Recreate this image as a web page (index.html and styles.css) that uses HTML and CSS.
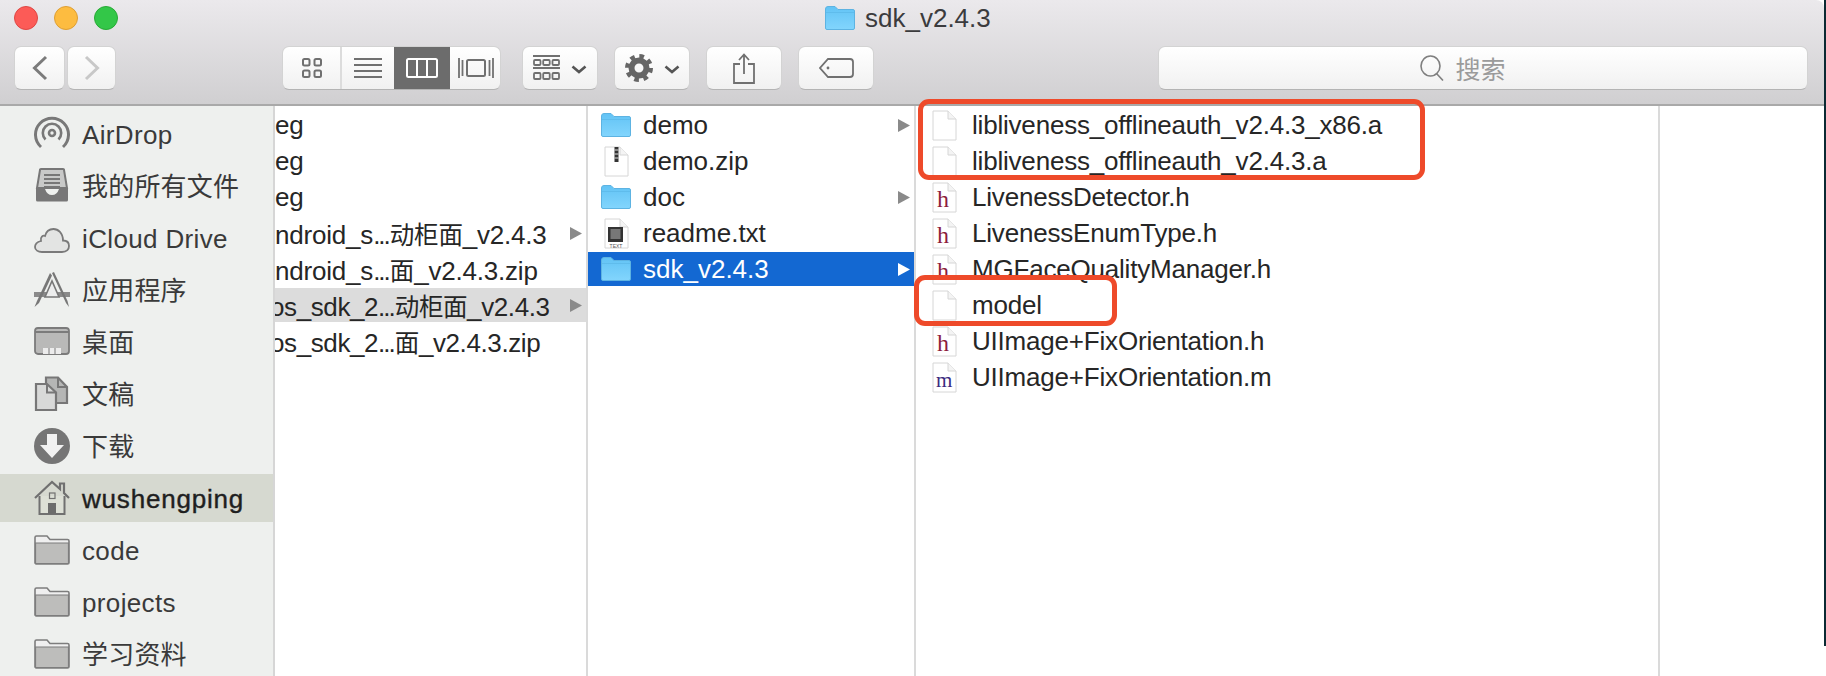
FILE: index.html
```html
<!DOCTYPE html>
<html lang="zh">
<head>
<meta charset="utf-8">
<title>sdk_v2.4.3</title>
<link rel="stylesheet" href="styles.css">
</head>
<body>
<svg class="defs" width="0" height="0" aria-hidden="true">
  <defs>
    <linearGradient id="fb" x1="0" y1="0" x2="0" y2="1"><stop offset="0" stop-color="#62c3f5"/><stop offset="1" stop-color="#82d5fd"/></linearGradient>
    <symbol id="folder" viewBox="0 0 30 24">
      <path d="M0.5 3 Q0.5 0.5 3 0.5 H10 L13 3.5 H28 Q29.5 3.5 29.5 5 V22 Q29.5 23.5 28 23.5 H2 Q0.5 23.5 0.5 22 Z" fill="url(#fb)" stroke="#5db3e2" stroke-width="1"/>
      <path d="M1 6.5 H29" stroke="#5fbcec" stroke-width="1"/>
    </symbol>
    <symbol id="page" viewBox="0 0 25 31">
      <path d="M1 1 H16 L24 9 V30 H1 Z" fill="#fff" stroke="#d6d6d6" stroke-width="1"/>
      <path d="M16 1 V9 H24" fill="#f4f4f4" stroke="#d6d6d6" stroke-width="1"/>
    </symbol>
    <symbol id="sfolder" viewBox="0 0 36 30">
      <path d="M1 28 V2.5 Q1 1 2.5 1 H13 L16 4.5 H33.5 Q35 4.5 35 6 V27.5 Q35 29 33.5 29 H2 Z" fill="#efefef" stroke="#7d7d7d" stroke-width="1.6"/>
      <path d="M1.5 8 H34.5 V28.5 H1.5 Z" fill="#bdbdbb" stroke="#7d7d7d" stroke-width="1.2"/>
    </symbol>
    <symbol id="arrow" viewBox="0 0 12 13"><path d="M0 0 L12 6.5 L0 13 Z"/></symbol>
    <symbol id="chev" viewBox="0 0 16 9"><path d="M1.5 1.5 L8 7 L14.5 1.5" fill="none" stroke="#555" stroke-width="2.6"/></symbol>
  </defs>
</svg>
<div class="window">
  <header class="toolbar">
    <div class="titlerow">
      <div class="lights">
        <span class="light red"></span><span class="light yellow"></span><span class="light green"></span>
      </div>
      <div class="title">
        <svg class="title-icon" width="30" height="24"><use href="#folder"/></svg>
        <span>sdk_v2.4.3</span>
      </div>
    </div>
    <div class="toolrow">
      <div class="btn nav-back">
        <svg width="16" height="26" viewBox="0 0 16 26"><path d="M14 2 L2.5 13 L14 24" fill="none" stroke="#7b7b7b" stroke-width="3"/></svg>
      </div>
      <div class="btn nav-fwd">
        <svg width="16" height="26" viewBox="0 0 16 26"><path d="M2 2 L13.5 13 L2 24" fill="none" stroke="#c8c8c8" stroke-width="3"/></svg>
      </div>
      <div class="btn-group">
        <div class="seg seg-icons">
          <svg width="22" height="22" viewBox="0 0 22 22" fill="none" stroke="#707070" stroke-width="2"><rect x="2" y="2" width="6.5" height="6.5" rx="1.5"/><rect x="13.5" y="2" width="6.5" height="6.5" rx="1.5"/><rect x="2" y="13.5" width="6.5" height="6.5" rx="1.5"/><rect x="13.5" y="13.5" width="6.5" height="6.5" rx="1.5"/></svg>
        </div>
        <div class="seg seg-list">
          <svg width="28" height="20" viewBox="0 0 28 20" stroke="#707070" stroke-width="2"><path d="M0 1 H28 M0 7 H28 M0 13 H28 M0 19 H28"/></svg>
        </div>
        <div class="seg seg-cols">
          <svg width="32" height="20" viewBox="0 0 32 20" fill="none" stroke="#fff" stroke-width="2"><rect x="1" y="1" width="30" height="18" rx="1.5"/><path d="M11 1 V19 M21 1 V19"/></svg>
        </div>
        <div class="seg seg-flow">
          <svg width="36" height="22" viewBox="0 0 36 22" fill="none" stroke="#707070" stroke-width="1.8"><path d="M1 1 V21 M4.5 3 V19 M35 1 V21 M31.5 3 V19"/><rect x="9" y="3" width="18" height="16" rx="1.5" stroke-width="2"/></svg>
        </div>
      </div>
      <div class="btn arrange">
        <svg width="27" height="26" viewBox="0 0 27 26" stroke="#707070" fill="none" stroke-width="1.8"><path d="M0 1 H27 M0 13 H27"/><rect x="1" y="5" width="6.5" height="5" rx="1"/><rect x="10.2" y="5" width="6.5" height="5" rx="1"/><rect x="19.5" y="5" width="6.5" height="5" rx="1"/><rect x="1" y="18" width="6.5" height="6" rx="1"/><rect x="10.2" y="18" width="6.5" height="6" rx="1"/><rect x="19.5" y="18" width="6.5" height="6" rx="1"/></svg>
        <svg class="chev" width="16" height="9"><use href="#chev"/></svg>
      </div>
      <div class="btn action">
        <svg width="28" height="28" viewBox="0 0 28 28" fill="none" stroke="#666"><circle cx="14" cy="14" r="11.5" stroke-width="5" stroke-dasharray="4.5 4.53"/><circle cx="14" cy="14" r="7.5" stroke-width="6"/></svg>
        <svg class="chev" width="16" height="9"><use href="#chev"/></svg>
      </div>
      <div class="btn share">
        <svg width="22" height="31" viewBox="0 0 22 31" fill="none" stroke="#707070" stroke-width="1.8"><path d="M7 11 H1 V30 H21 V11 H15"/><path d="M11 21 V2 M6 7 L11 1.5 L16 7"/></svg>
      </div>
      <div class="btn tag">
        <svg width="35" height="20" viewBox="0 0 35 20" fill="none" stroke="#707070" stroke-width="1.8"><path d="M9 1 H31 Q34 1 34 4 V16 Q34 19 31 19 H9 L1 10 Z"/><circle cx="9" cy="10" r="1.4" fill="#707070" stroke="none"/></svg>
      </div>
      <div class="search">
        <svg width="24" height="26" viewBox="0 0 24 26" fill="none" stroke="#7f7f7f" stroke-width="1.6"><ellipse cx="10.5" cy="11" rx="9.5" ry="10"/><path d="M16.5 18.5 L23 25.5"/></svg>
        <span>搜索</span>
      </div>
    </div>
  </header>

  <main class="browser">
    <nav class="sidebar">
      <div class="side-row">
        <svg class="side-icon" width="36" height="36" viewBox="0 0 36 36" fill="none" stroke="#787878" stroke-width="2.6"><circle cx="18" cy="17" r="3"/><path d="M11.5 23.5 A9.2 9.2 0 1 1 24.5 23.5"/><path d="M7 31 A16.5 16.5 0 1 1 29 31" stroke-width="3"/></svg>
        <span class="lat">AirDrop</span>
      </div>
      <div class="side-row">
        <svg class="side-icon" width="36" height="36" viewBox="0 0 36 36"><path d="M6 2 Q6 1 7 1 H29 Q30 1 30 2 L33 20 H3 Z" fill="#c8c9c8" stroke="#777" stroke-width="2"/><path d="M10 7 H26 M10 11 H26 M10 15 H26 M10 19 H26" stroke="#777" stroke-width="1.8"/><path d="M2 21 H11 Q13 27 18 27 Q23 27 25 21 H34 V32 Q34 33.5 32.5 33.5 H3.5 Q2 33.5 2 32 Z" fill="#777"/></svg>
        <span class="zh">我的所有文件</span>
      </div>
      <div class="side-row">
        <svg class="side-icon" width="36" height="36" viewBox="0 0 36 36"><path d="M8 32 H28 C33 32 35 29 35 26 C35 23 33 20.5 29 20.5 C29 13 24 9 19.5 9 C15 9 12 12 11 16 C9 15 6 17 7 21 C3 22 1 24.5 1 27 C1 30 4 32 8 32 Z" fill="#e3e4e3" stroke="#7a7a7a" stroke-width="1.8"/></svg>
        <span class="lat">iCloud Drive</span>
      </div>
      <div class="side-row">
        <svg class="side-icon" width="36" height="36" viewBox="0 0 36 36"><path d="M0 20 H36 V25 H0 Z" fill="#8a8a8a"/><path d="M18 1 L32 31 L35 35 L33.5 29 L20 0 Z" fill="#777"/><path d="M16 1 L3 29 L0.5 35 L5 31 L18 3.5 Z" fill="#777"/><path d="M11 25 L18 9 L25 25 Z" fill="#eceded" stroke="#777" stroke-width="1.6"/></svg>
        <span class="zh">应用程序</span>
      </div>
      <div class="side-row">
        <svg class="side-icon" width="36" height="36" viewBox="0 0 36 36"><rect x="1" y="4" width="34" height="26" rx="3" fill="#b9b9b8" stroke="#7b7b7b" stroke-width="1.8"/><path d="M1 8 H35" stroke="#7b7b7b" stroke-width="1.8"/><rect x="9" y="24" width="18" height="6" fill="#ececec"/><path d="M15 24 V30 M21 24 V30" stroke="#7b7b7b"/></svg>
        <span class="zh">桌面</span>
      </div>
      <div class="side-row">
        <svg class="side-icon" width="36" height="36" viewBox="0 0 36 36"><path d="M12 1.5 H24 L33 11 V27 H12 Z" fill="#b5b6b5" stroke="#777" stroke-width="2.2"/><path d="M24 1.5 V11 H33" fill="none" stroke="#777" stroke-width="2"/><path d="M2 8 H13 L22 16.5 V34 H2 Z" fill="#d8d9d8" stroke="#777" stroke-width="2.2"/><path d="M13 8 V16.5 H22" fill="none" stroke="#777" stroke-width="2"/></svg>
        <span class="zh">文稿</span>
      </div>
      <div class="side-row">
        <svg class="side-icon" width="36" height="36" viewBox="0 0 36 36"><circle cx="18" cy="18" r="18" fill="#757575"/><path d="M13 6 H23 V17 H30 L18 30 L6 17 H13 Z" fill="#f1f1f1"/></svg>
        <span class="zh">下载</span>
      </div>
      <div class="side-row side-current">
        <svg class="side-icon" width="36" height="36" viewBox="0 0 36 36"><path d="M1 18 L18 2 L26 9 V3.5 H30 V13 L35 18" fill="none" stroke="#707070" stroke-width="2.2"/><path d="M5.5 16 V34 H30.5 V16" fill="#dde0d6" stroke="#707070" stroke-width="2"/><rect x="15.5" y="13" width="5.5" height="5.5" fill="none" stroke="#707070" stroke-width="1.2"/><rect x="14" y="23" width="8" height="11" fill="#6c6c6c"/></svg>
        <span class="lat">wushengping</span>
      </div>
      <div class="side-row">
        <svg class="side-icon" width="36" height="30"><use href="#sfolder"/></svg>
        <span class="lat">code</span>
      </div>
      <div class="side-row">
        <svg class="side-icon" width="36" height="30"><use href="#sfolder"/></svg>
        <span class="lat">projects</span>
      </div>
      <div class="side-row">
        <svg class="side-icon" width="36" height="30"><use href="#sfolder"/></svg>
        <span class="zh">学习资料</span>
      </div>
    </nav>

    <section class="col col-a">
      <div class="row"><span class="name">eg</span></div>
      <div class="row"><span class="name">eg</span></div>
      <div class="row"><span class="name">eg</span></div>
      <div class="row"><span class="name">ndroid_s<span class="dots">...</span><span class="han">动柜面</span>_v2.4.3</span><svg class="arrow" width="12" height="13"><use href="#arrow"/></svg></div>
      <div class="row"><span class="name">ndroid_s<span class="dots">...</span><span class="han">面</span>_v2.4.3.zip</span></div>
      <div class="row row-parent"><span class="name clipped">os_sdk_2<span class="dots">...</span><span class="han">动柜面</span>_v2.4.3</span><svg class="arrow" width="12" height="13"><use href="#arrow"/></svg></div>
      <div class="row"><span class="name clipped">os_sdk_2<span class="dots">...</span><span class="han">面</span>_v2.4.3.zip</span></div>
    </section>

    <section class="col col-b">
      <div class="row">
        <svg class="f-icon" width="30" height="24"><use href="#folder"/></svg><span class="name">demo</span><svg class="arrow" width="12" height="13"><use href="#arrow"/></svg>
      </div>
      <div class="row">
        <svg class="f-icon" width="30" height="31" viewBox="0 0 30 31"><use href="#page" x="3" width="25" height="31"/><rect x="13.5" y="1" width="4" height="15" fill="#333"/><path d="M13.5 4 H17.5 M13.5 8 H17.5 M13.5 12 H17.5" stroke="#ddd"/></svg><span class="name">demo.zip</span>
      </div>
      <div class="row">
        <svg class="f-icon" width="30" height="24"><use href="#folder"/></svg><span class="name">doc</span><svg class="arrow" width="12" height="13"><use href="#arrow"/></svg>
      </div>
      <div class="row">
        <svg class="f-icon" width="30" height="31" viewBox="0 0 30 31"><use href="#page" x="3" width="25" height="31"/><rect x="7" y="9" width="15" height="15" fill="#333"/><rect x="9.5" y="11" width="10" height="10" fill="#777"/><text x="15" y="29.5" class="type-tag">TEXT</text></svg><span class="name">readme.txt</span>
      </div>
      <div class="row row-selected">
        <svg class="f-icon" width="30" height="24"><use href="#folder"/></svg><span class="name">sdk_v2.4.3</span><svg class="arrow" width="12" height="13"><use href="#arrow"/></svg>
      </div>
    </section>

    <section class="col col-c">
      <div class="row"><svg class="f-icon" width="25" height="31"><use href="#page"/></svg><span class="name">libliveness_offlineauth_v2.4.3_x86.a</span></div>
      <div class="row"><svg class="f-icon" width="25" height="31"><use href="#page"/></svg><span class="name">libliveness_offlineauth_v2.4.3.a</span></div>
      <div class="row"><svg class="f-icon" width="25" height="31"><use href="#page"/><text x="11" y="25" class="code-h">h</text></svg><span class="name">LivenessDetector.h</span></div>
      <div class="row"><svg class="f-icon" width="25" height="31"><use href="#page"/><text x="11" y="25" class="code-h">h</text></svg><span class="name">LivenessEnumType.h</span></div>
      <div class="row"><svg class="f-icon" width="25" height="31"><use href="#page"/><text x="11" y="25" class="code-h">h</text></svg><span class="name">MGFaceQualityManager.h</span></div>
      <div class="row"><svg class="f-icon" width="25" height="31"><use href="#page"/></svg><span class="name">model</span></div>
      <div class="row"><svg class="f-icon" width="25" height="31"><use href="#page"/><text x="11" y="25" class="code-h">h</text></svg><span class="name">UIImage+FixOrientation.h</span></div>
      <div class="row"><svg class="f-icon" width="25" height="31"><use href="#page"/><text x="12" y="25" class="code-m">m</text></svg><span class="name">UIImage+FixOrientation.m</span></div>
    </section>

    <section class="col col-d"></section>
  </main>
  <div class="mark mark-top"></div>
  <div class="mark mark-model"></div>
</div>
<div class="edge"></div>
</body>
</html>
```
FILE: styles.css
```css
html, body { margin: 0; padding: 0; height: 676px; overflow: hidden; background: #fff; }
body {
  display: flex;
  font-family: "Liberation Sans", "Noto Sans CJK SC", sans-serif;
  font-size: 26px;
  color: #2b2b2b;
}
.defs { position: absolute; }
.window { width: 1824px; height: 676px; display: flex; flex-direction: column; position: relative; }
.edge { width: 2px; height: 646px; background: #0b2a33; }

.toolbar {
  height: 104px;
  flex: none;
  background: linear-gradient(#ebe9ec, #d0cfd1);
  border-bottom: 2px solid #a9a9a9;
  border-top-right-radius: 8px;
  box-sizing: content-box;
}
.titlerow { height: 46px; display: flex; }
.lights { display: flex; gap: 16px; padding: 6px 0 0 14px; }
.light { width: 24px; height: 24px; border-radius: 50%; box-sizing: border-box; }
.red { background: #fc5b57; border: 1px solid #df4744; }
.yellow { background: #fdbc40; border: 1px solid #de9f34; }
.green { background: #33c748; border: 1px solid #27aa35; }
.title { display: flex; align-items: flex-start; gap: 10px; margin-left: 707px; padding-top: 6px; color: #3b3b3d; line-height: 24px; }

.toolrow { display: flex; align-items: flex-start; padding-left: 14px; }
.btn, .search, .btn-group {
  height: 44px;
  box-sizing: border-box;
  background: linear-gradient(#ffffff, #f1f1f1);
  border: 1px solid #d3d3d3;
  border-bottom-color: #b4b4b4;
  border-radius: 7px;
  display: flex;
  align-items: center;
  justify-content: center;
}
.nav-back { width: 51px; }
.nav-fwd { width: 49px; margin-left: 2px; }
.btn-group { width: 219px; margin-left: 166px; overflow: hidden; justify-content: flex-start; }
.seg { height: 44px; display: flex; align-items: center; justify-content: center; flex: none; }
.seg-icons { width: 57px; border-right: 2px solid #dcdcdc; }
.seg-list { width: 52px; }
.seg-cols { width: 56px; background: #6c6c6c; }
.seg-flow { width: 52px; }
.arrange { width: 76px; margin-left: 21px; gap: 11px; }
.action { width: 76px; margin-left: 16px; gap: 11px; }
.chev { margin-top: 2px; }
.share { width: 76px; margin-left: 16px; }
.tag { width: 76px; margin-left: 16px; }
.search {
  width: 650px;
  margin-left: 284px;
  gap: 11px;
  padding-right: 40px;
  color: #9b9b9b;
  font-size: 25px;
}

.browser { flex: 1; display: flex; min-height: 0; overflow: hidden; }
.sidebar {
  width: 273px;
  flex: none;
  background: #eef0ee;
  border-right: 2px solid #d6d6d6;
  padding-top: 4px;
  display: flex;
  flex-direction: column;
  gap: 4px;
}
.side-row { height: 48px; flex: none; display: flex; align-items: center; padding-left: 34px; color: #3a3a3a; }
.side-icon { width: 36px; flex: none; margin-right: 12px; }
.lat { padding-top: 2px; letter-spacing: 0.35px; }
.zh { padding-bottom: 3px; letter-spacing: 0.2px; }
.side-current { background: #d6d9d0; color: #1f1f1f; font-weight: 500; -webkit-text-stroke: 0.4px #1f1f1f; }
.side-current .lat { letter-spacing: 0.8px; }

.col { flex: none; padding-top: 2px; overflow: hidden; border-right: 2px solid #dadada; }
.col-a { width: 311px; }
.col-b { width: 326px; }
.col-c { width: 742px; }
.col-d { flex: 1; border-right: 0; }
.row { height: 34px; margin-bottom: 2px; display: flex; align-items: center; color: #262626; white-space: nowrap; }
.name { flex: 1; }
.col-a .row { padding-left: 0; padding-right: 4px; letter-spacing: -0.2px; }
.col-b .row { padding-left: 13px; padding-right: 4px; }
.col-c .row { padding-left: 16px; letter-spacing: -0.2px; }
.clipped { margin-left: -5px; letter-spacing: -0.4px; }
.dots { letter-spacing: -2px; margin-right: 1px; }
.han { font-size: 24.5px; }
.row-parent { background: #dcdcdc; }
.row-selected { background: #1368d2; color: #fff; }
.arrow { fill: #8a8a8a; flex: none; }
.row-selected .arrow { fill: #fff; }
.f-icon { flex: none; overflow: visible; }
.col-b .f-icon { margin-right: 12px; }
.col-c .f-icon { margin-right: 15px; }
.type-tag { font-size: 5px; fill: #555; text-anchor: middle; font-family: "Liberation Sans", sans-serif; }
.code-h { font: 24px "Liberation Serif", serif; fill: #8c1c3c; text-anchor: middle; }
.code-m { font: 21px "Liberation Serif", serif; fill: #3a2b80; text-anchor: middle; }

.mark { position: absolute; border: 5px solid #ee4a2a; border-radius: 11px; box-sizing: border-box; }
.mark-top { left: 918px; top: 99px; width: 507px; height: 81px; }
.mark-model { left: 914px; top: 275px; width: 203px; height: 51px; }
```
